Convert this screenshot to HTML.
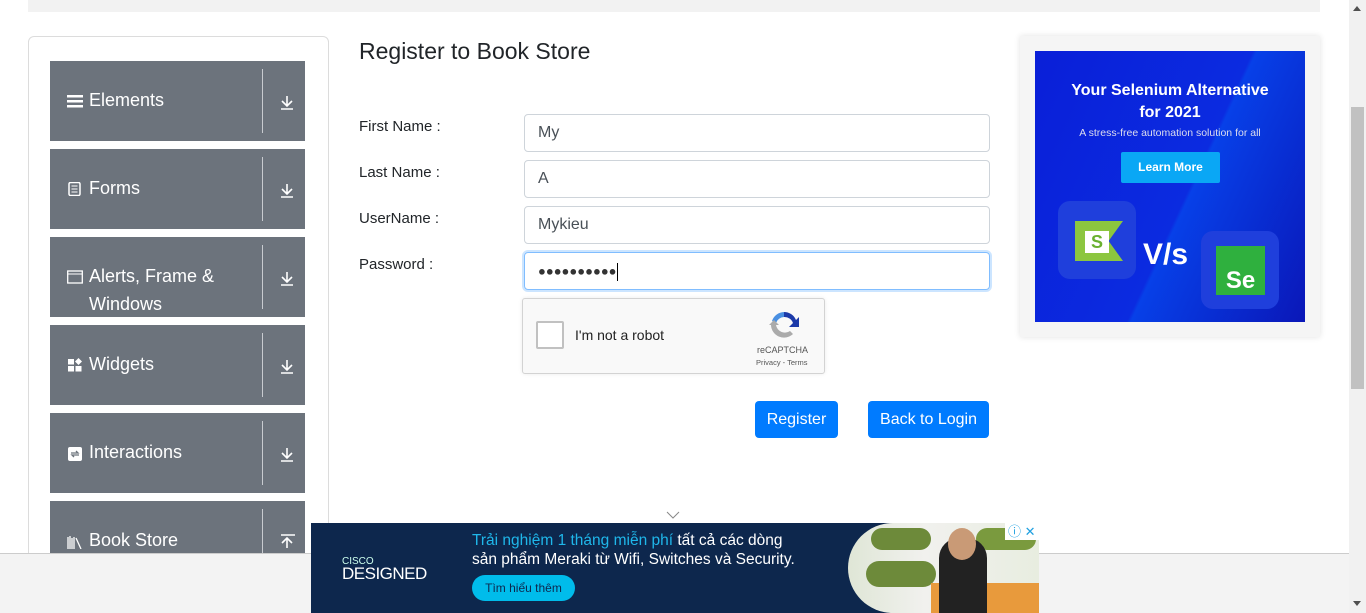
<!DOCTYPE html>
<html><head><meta charset="utf-8"><style>
*{box-sizing:border-box;margin:0;padding:0}
body{width:1366px;height:613px;overflow:hidden;background:#fff;font-family:"Liberation Sans","DejaVu Sans",sans-serif;position:relative;color:#212529}
.abs{position:absolute}
.topstrip{left:28px;top:0;width:1292px;height:12px;background:#f2f2f2}
.side{left:28px;top:36px;width:301px;height:540px;border:1px solid #dcdcdc;border-radius:6px}
.card{position:absolute;left:50px;width:255px;height:80px;background:#6c737c;color:#fff;overflow:hidden}
.card .t{position:absolute;left:39px;font-size:18px;line-height:28px}
.card .ic{position:absolute;left:17px;width:16px;height:14px}
.card .div{position:absolute;left:212px;top:8px;width:1px;height:64px;background:#c8cbd0}
.card .ar{position:absolute;left:229px;top:33px;width:16px;height:16px}
h1{position:absolute;left:359px;top:38px;font-size:23px;font-weight:normal;color:#212529}
.lbl{position:absolute;left:359px;font-size:15px;color:#212529}
.inp{position:absolute;left:524px;width:466px;height:38px;border:1px solid #ced4da;border-radius:4px;font-size:16px;color:#495057;padding:9px 13px}
.btn{position:absolute;top:401px;height:37px;background:#007bff;color:#fff;border-radius:4px;font-size:16px;line-height:37px;text-align:center}
</style></head><body>
<div class="abs topstrip"></div>
<div class="abs side"></div>

<div class="card" style="top:61px"><svg class="ic" style="top:33px" viewBox="0 0 16 14"><rect y="1" width="16" height="2.5" fill="#fff"/><rect y="6" width="16" height="2.5" fill="#fff"/><rect y="11" width="16" height="2.5" fill="#fff"/></svg><div class="t" style="top:25px">Elements</div><div class="div"></div><svg class="ar" viewBox="0 0 16 16"><path d="M8 2v10M3 7l5 5 5-5M2 15h12" stroke="#fff" stroke-width="1.6" fill="none"/></svg></div>
<div class="card" style="top:149px"><svg class="ic" style="top:33px" viewBox="0 0 16 14"><rect x="2" y="0.5" width="11" height="13" rx="1.5" fill="none" stroke="#fff" stroke-width="1.5"/><path d="M4.5 4h6M4.5 7h6M4.5 10h6" stroke="#fff"/></svg><div class="t" style="top:25px">Forms</div><div class="div"></div><svg class="ar" viewBox="0 0 16 16"><path d="M8 2v10M3 7l5 5 5-5M2 15h12" stroke="#fff" stroke-width="1.6" fill="none"/></svg></div>
<div class="card" style="top:237px"><svg class="ic" style="top:33px" viewBox="0 0 16 14"><rect x="0.7" y="1" width="14.6" height="12" fill="none" stroke="#fff" stroke-width="1.3"/><path d="M1 4h14" stroke="#fff"/></svg><div class="t" style="top:25px;line-height:28px">Alerts, Frame &amp;<br>Windows</div><div class="div"></div><svg class="ar" viewBox="0 0 16 16"><path d="M8 2v10M3 7l5 5 5-5M2 15h12" stroke="#fff" stroke-width="1.6" fill="none"/></svg></div>
<div class="card" style="top:325px"><svg class="ic" style="top:33px" viewBox="0 0 16 14"><rect x="1" y="1" width="6" height="5.5" fill="#fff"/><rect x="1" y="8" width="6" height="5.5" fill="#fff"/><rect x="8.5" y="8" width="6" height="5.5" fill="#fff"/><path d="M11.5 0l3.5 3.5-3.5 3.5-3.5-3.5z" fill="#fff"/></svg><div class="t" style="top:25px">Widgets</div><div class="div"></div><svg class="ar" viewBox="0 0 16 16"><path d="M8 2v10M3 7l5 5 5-5M2 15h12" stroke="#fff" stroke-width="1.6" fill="none"/></svg></div>
<div class="card" style="top:413px"><svg class="ic" style="top:34px" viewBox="0 0 16 14"><rect x="1" y="0" width="14" height="14" rx="2" fill="#fff"/><path d="M4 6h7l-2-2M12 8H5l2 2" stroke="#6c737c" stroke-width="1.3" fill="none"/></svg><div class="t" style="top:25px">Interactions</div><div class="div"></div><svg class="ar" viewBox="0 0 16 16"><path d="M8 2v10M3 7l5 5 5-5M2 15h12" stroke="#fff" stroke-width="1.6" fill="none"/></svg></div>
<div class="card" style="top:501px"><svg class="ic" style="top:34px" viewBox="0 0 16 14"><path d="M1 2v12M3 1v13M5 3v11M7 2v12M9 3l5 11" stroke="#fff" stroke-width="1.3"/></svg><div class="t" style="top:25px">Book Store</div><div class="div"></div><svg class="ar" viewBox="0 0 16 16"><path d="M8 14V4M3 9l5-5 5 5M2 1h14" stroke="#fff" stroke-width="1.6" fill="none"/></svg></div>

<h1>Register to Book Store</h1>
<div class="lbl" style="top:118px">First Name :</div>
<div class="lbl" style="top:164px">Last Name :</div>
<div class="lbl" style="top:210px">UserName :</div>
<div class="lbl" style="top:256px">Password :</div>
<div class="inp" style="top:114px">My</div>
<div class="inp" style="top:160px">A</div>
<div class="inp" style="top:206px">Mykieu</div>
<div class="inp" style="top:252px;border-color:#80bdff;box-shadow:0 0 0 2px rgba(0,123,255,.2);font-size:13px;color:#333;padding-top:10px">●●●●●●●●●●<span style="display:inline-block;width:1px;height:18px;background:#000;vertical-align:middle"></span></div>

<div class="abs" style="left:522px;top:298px;width:303px;height:76px;background:#f9f9f9;border:1px solid #d3d3d3;border-radius:3px;box-shadow:0 0 4px rgba(0,0,0,.08)">
 <div class="abs" style="left:13px;top:22px;width:28px;height:28px;border:2px solid #c1c1c1;border-radius:2px;background:#fff"></div>
 <div class="abs" style="left:52px;top:28px;font-size:14px;color:#222">I'm not a robot</div>
 <svg class="abs" style="left:245px;top:10px" width="32" height="32" viewBox="0 0 32 32"><path d="M16 3a13 13 0 0 1 12 8l3-3v10H21l4-4a9 9 0 0 0-9-6z" fill="#1c3aa9"/><path d="M16 3A13 13 0 0 0 4 12l4 2a9 9 0 0 1 8-6z" fill="#4a90e2"/><path d="M3 16a13 13 0 0 0 22 9l-3-3a9 9 0 0 1-14-6H11l-5-5-5 5z" fill="#ababab"/></svg>
 <div class="abs" style="left:234px;top:46px;font-size:9px;color:#555">reCAPTCHA</div>
 <div class="abs" style="left:233px;top:59px;font-size:7.5px;color:#555">Privacy - Terms</div>
</div>

<div class="btn" style="left:755px;width:83px">Register</div>
<div class="btn" style="left:868px;width:121px">Back to Login</div>

<div class="abs" style="left:1020px;top:36px;width:300px;height:301px;background:#f5f5f5;box-shadow:0 0 6px rgba(0,0,0,.12)"></div>
<div class="abs" style="left:1035px;top:51px;width:270px;height:271px;background:linear-gradient(115deg,#0a1fd8 0%,#0b2be0 55%,#0740e8 56%,#0a17b8 100%);overflow:hidden;color:#fff;text-align:center">
 <div style="position:absolute;top:29px;width:100%;font-size:16px;font-weight:bold;line-height:22px">Your Selenium Alternative<br>for 2021</div>
 <div style="position:absolute;top:76px;width:100%;font-size:10.5px;color:#dde">A stress-free automation solution for all</div>
 <div style="position:absolute;left:86px;top:101px;width:99px;height:31px;background:#0aa7f5;border-radius:2px;font-size:12px;font-weight:bold;line-height:31px">Learn More</div>
 <div style="position:absolute;left:23px;top:150px;width:78px;height:78px;background:#1f3fdc;border-radius:12px"></div>
 <div style="position:absolute;left:40px;top:170px;width:48px;height:40px;background:#8cc63f;clip-path:polygon(0 0,100% 0,70% 50%,100% 100%,0 100%)"></div>
 <div style="position:absolute;left:50px;top:180px;width:24px;height:22px;background:#fff;color:#6ab130;font-weight:bold;font-size:18px;line-height:22px">S</div>
 <div style="position:absolute;left:108px;top:187px;font-size:30px;font-weight:bold">V/s</div>
 <div style="position:absolute;left:166px;top:180px;width:78px;height:78px;background:#1f3fdc;border-radius:12px"></div>
 <div style="position:absolute;left:181px;top:195px;width:49px;height:49px;background:#2fb03e;font-size:24px;font-weight:bold;line-height:70px">Se</div>
</div>

<div class="abs" style="left:0;top:553px;width:1349px;height:60px;background:#f3f3f3;border-top:1px solid #ccc"></div>
<svg class="abs" style="left:666px;top:511px" width="14" height="8"><path d="M1 1l6 6 6-6" stroke="#888" fill="none"/></svg>

<div class="abs" style="left:311px;top:523px;width:728px;height:90px;background:#0d274d;overflow:hidden">
 <div class="abs" style="left:31px;top:33px;color:#cfe;font-size:10px">CISCO</div>
 <div class="abs" style="left:31px;top:41px;color:#fff;font-size:17px;letter-spacing:-0.5px">DESIGNED</div>
 <div class="abs" style="left:161px;top:8px;font-size:15.5px;color:#fff;line-height:19px;white-space:nowrap"><span style="color:#1fb7ea">Trải nghiệm 1 tháng miễn phí</span> tất cả các dòng<br>sản phẩm Meraki từ Wifi, Switches và Security.</div>
 <div class="abs" style="left:161px;top:52px;width:103px;height:26px;background:#00bceb;border-radius:13px;font-size:12px;color:#0d274d;text-align:center;line-height:26px">Tìm hiểu thêm</div>
 <div class="abs" style="left:537px;top:0;width:191px;height:90px;background:linear-gradient(90deg,#dfe6d6,#f1f1ee 40%,#e8ede0);border-radius:60px 0 0 60px"></div>
 <div class="abs" style="left:560px;top:5px;width:60px;height:22px;background:#6d8a3a;border-radius:11px"></div>
 <div class="abs" style="left:555px;top:38px;width:70px;height:26px;background:#6d8a3a;border-radius:13px"></div>
 <div class="abs" style="left:665px;top:5px;width:60px;height:22px;background:#7a9a3e;border-radius:11px"></div>
 <div class="abs" style="left:620px;top:60px;width:108px;height:30px;background:#e89a3c"></div>
 <div class="abs" style="left:628px;top:15px;width:48px;height:75px;background:#222;border-radius:20px 20px 0 0"></div>
 <div class="abs" style="left:637px;top:5px;width:28px;height:32px;background:#c99a76;border-radius:50%"></div>
 <div class="abs" style="left:694px;top:0;width:34px;height:17px;background:#fff;color:#1fa0e0;font-size:13px;line-height:17px;padding-left:3px">ⓘ ✕</div>
</div>

<div class="abs" style="left:1349px;top:0;width:17px;height:613px;background:#f1f1f1"></div>
<div class="abs" style="left:1351px;top:107px;width:13px;height:282px;background:#c1c1c1"></div>
<svg class="abs" style="left:1353px;top:6px" width="10" height="6"><path d="M0 5h8l-4-5z" fill="#505050"/></svg>
<svg class="abs" style="left:1353px;top:601px" width="10" height="6"><path d="M0 0h8l-4 5z" fill="#505050"/></svg>
</body></html>
